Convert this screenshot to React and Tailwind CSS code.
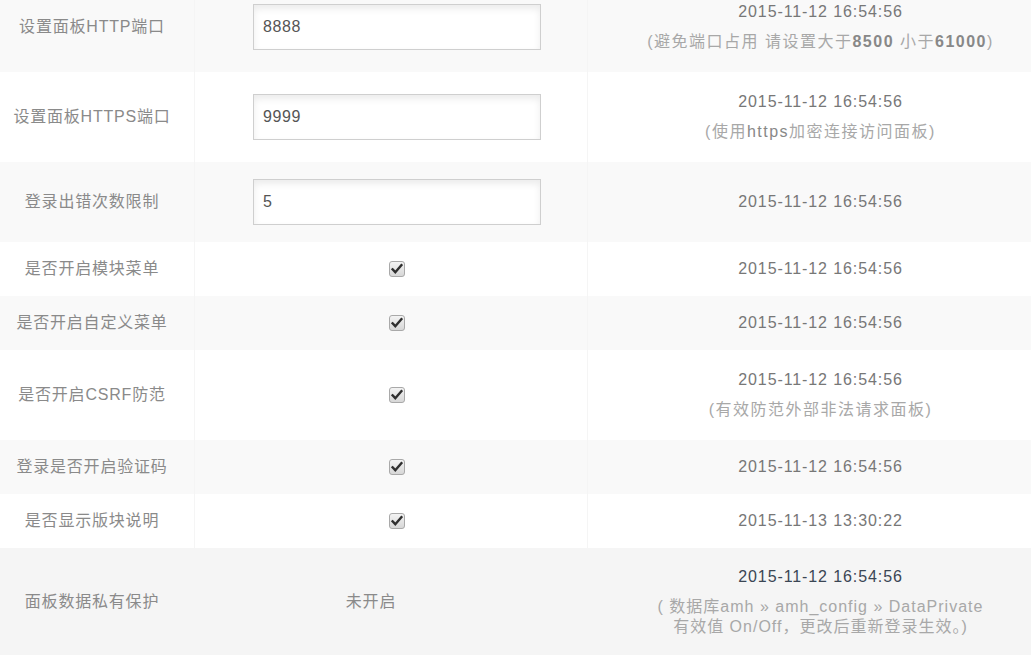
import React from "react";

function Check() {
  return (
    <svg width="16" height="16" viewBox="0 0 16 16" className="block">
      <defs>
        <linearGradient id="cbg" x1="0" y1="0" x2="0" y2="1">
          <stop offset="0" stopColor="#f4f4f4" />
          <stop offset="1" stopColor="#d6d6d6" />
        </linearGradient>
      </defs>
      <rect x="0.5" y="0.5" width="15" height="15" rx="2.5" fill="url(#cbg)" stroke="#a9a9a9" />
      <path d="M3.6 8.4 L6.3 11.2 L12.4 4.2" fill="none" stroke="#2f2f2f" strokeWidth="2.4" strokeLinecap="square" />
    </svg>
  );
}

function Input({ value }) {
  return (
    <div className="w-[288px] h-[46px] border border-[#cfcfcf] bg-white shadow-[inset_0_4px_7px_rgba(0,0,0,0.08)] flex items-center pl-[9px] text-[16px] tracking-[0.6px] text-[#555]">
      {value}
    </div>
  );
}

function Row({ h, bg, label, children, date, note, noteClass = "tracking-[1.5px]", dateClass = "text-[#777]", midClass = "pl-[12px]" }) {
  return (
    <div className={`flex ${bg}`} style={{ height: h }}>
      <div className="w-[195px] shrink-0 flex items-center justify-center pr-[10px] border-r border-[#f5f5f5] text-[16px] tracking-[0.8px] text-[#8a8a8a]">
        {label}
      </div>
      <div className={`w-[393px] shrink-0 flex items-center justify-center border-r border-[#f5f5f5] ${midClass}`}>
        {children}
      </div>
      <div className="flex-1 flex flex-col items-center justify-center pl-[22px] text-center">
        <div className={`text-[16px] leading-[20px] tracking-[0.9px] ${dateClass}`}>{date}</div>
        {note && <div className={`mt-[10px] text-[16px] leading-[20px] text-[#a8a8a8] ${noteClass}`}>{note}</div>}
      </div>
    </div>
  );
}

export default function App() {
  const d1 = "2015-11-12 16:54:56";
  return (
    <div className="w-[1031px] h-[655px] overflow-hidden bg-white font-['Liberation_Sans','Noto_Sans_CJK_SC',sans-serif]">
      <div className="-mt-[18px]">
        <Row h={90} bg="bg-[#f9f9f9]" label="设置面板HTTP端口" date={d1}
          note={<>(避免端口占用 请设置大于<b className="text-[#888]">8500</b> 小于<b className="text-[#888]">61000</b>)</>}>
          <Input value="8888" />
        </Row>
        <Row h={90} bg="bg-white" label="设置面板HTTPS端口" date={d1}
          note={<>(使用<span className="text-[#888]">https</span>加密连接访问面板)</>}>
          <Input value="9999" />
        </Row>
        <Row h={80} bg="bg-[#f9f9f9]" label="登录出错次数限制" date={d1}>
          <Input value="5" />
        </Row>
        <Row h={54} bg="bg-white" label="是否开启模块菜单" date={d1}>
          <Check />
        </Row>
        <Row h={54} bg="bg-[#f9f9f9]" label="是否开启自定义菜单" date={d1}>
          <Check />
        </Row>
        <Row h={90} bg="bg-white" label="是否开启CSRF防范" date={d1} note="(有效防范外部非法请求面板)">
          <Check />
        </Row>
        <Row h={54} bg="bg-[#f9f9f9]" label="登录是否开启验证码" date={d1}>
          <Check />
        </Row>
        <Row h={54} bg="bg-white" label="是否显示版块说明" date="2015-11-13 13:30:22">
          <Check />
        </Row>
        <Row h={107} bg="bg-[#f5f5f5]" label="面板数据私有保护" date={d1} dateClass="text-[#3b4654]"
          midClass="pr-[40px]" noteClass="tracking-[1px]"
          note={<>( 数据库amh » amh_config » DataPrivate<br />有效值 On/Off，更改后重新登录生效。)</>}>
          <span className="text-[16px] tracking-[0.8px] text-[#8a8a8a]">未开启</span>
        </Row>
      </div>
    </div>
  );
}
